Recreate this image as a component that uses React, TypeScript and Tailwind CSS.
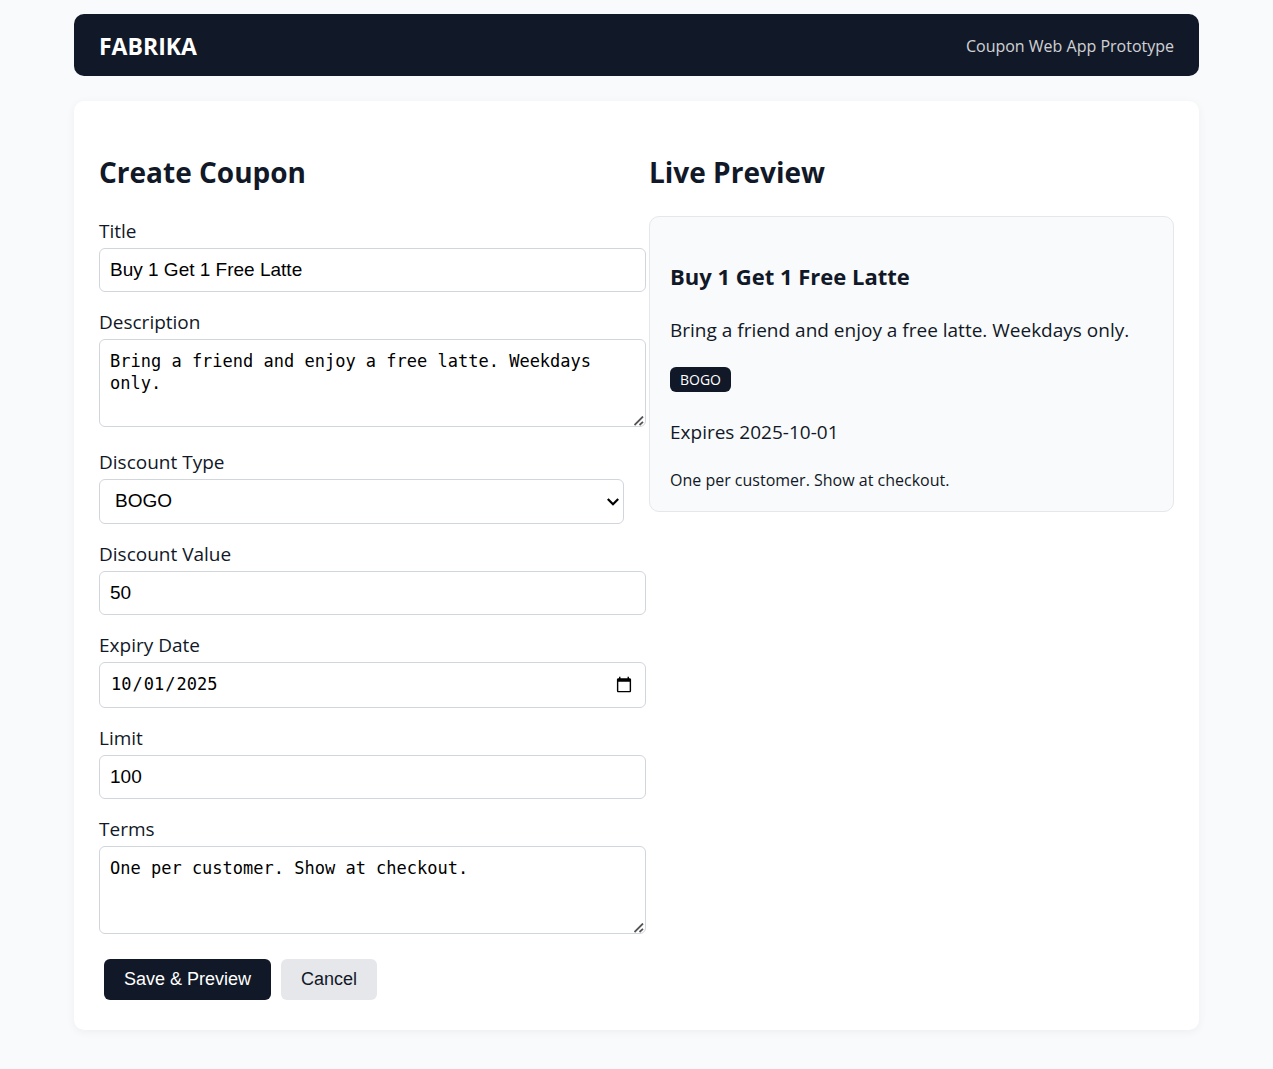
import { useState } from "react";
import type { ReactNode } from "react";

type ChangeHandler = (e: { target: { value: string } }) => void;

const control =
  "block box-content w-full rounded-md border border-gray-300 bg-white px-[10px] text-black";
const sans = "font-['Liberation_Sans',Arial,sans-serif]";
const mono = "font-['DejaVu_Sans_Mono',monospace]";

function Field({ id, label, children }: { id: string; label: string; children: ReactNode }) {
  return (
    <div>
      <label htmlFor={id} className="mb-px block text-[19px] leading-[31px]">
        {label}
      </label>
      {children}
    </div>
  );
}

function TextArea({ id, value, onChange }: { id: string; value: string; onChange: ChangeHandler }) {
  return (
    <div className="relative mb-[5px] box-content w-full pr-[22px]">
      <textarea
        id={id}
        className={`${control} ${mono} h-[66px] resize-none py-[10px] text-[17px] leading-[22px]`}
        value={value}
        onChange={onChange}
      />
      <svg
        className="pointer-events-none absolute right-0.5 bottom-px size-[10px]"
        viewBox="0 0 10 10"
        fill="none"
        stroke="#555"
        strokeWidth="1.8"
        aria-hidden="true"
      >
        <path d="M0.5 9 9 0.5M5.5 9 9 5.8" />
      </svg>
    </div>
  );
}

export default function App() {
  const initial = {
    title: "Buy 1 Get 1 Free Latte",
    description: "Bring a friend and enjoy a free latte. Weekdays only.",
    type: "BOGO",
    value: "50",
    expiry: "2025-10-01",
    limit: "100",
    terms: "One per customer. Show at checkout.",
  };
  const [coupon, setCoupon] = useState(initial);
  const set =
    (key: keyof typeof initial): ChangeHandler =>
    (e) =>
      setCoupon({ ...coupon, [key]: e.target.value });

  return (
    <div className="min-h-screen bg-gray-50 pt-[14px] pb-10 font-['Open_Sans','Noto_Sans',sans-serif] text-[#111827]">
      <div className="mx-auto max-w-[1125px]">
        <header className="flex h-[62px] items-center justify-between rounded-[10px] bg-[#111827] px-[25px] pt-0.5 text-white">
          <div className="text-[23px] font-bold">FABRIKA</div>
          <div className="text-base opacity-80">Coupon Web App Prototype</div>
        </header>

        <main className="mt-[25px] grid grid-cols-2 gap-[25px] rounded-[10px] bg-white p-[25px] shadow-[0_2px_10px_rgba(0,0,0,0.05)]">
          <section>
            <h2 className="mt-[26px] mb-6 text-[28px] leading-10 font-bold">Create Coupon</h2>
            <form className="flex flex-col gap-[15px]" onSubmit={(e) => e.preventDefault()}>
              <Field id="title" label="Title">
                <input id="title" className={`${control} ${sans} h-[42px] text-[19px]`} value={coupon.title} onChange={set("title")} />
              </Field>
              <Field id="description" label="Description">
                <TextArea id="description" value={coupon.description} onChange={set("description")} />
              </Field>
              <Field id="type" label="Discount Type">
                <div className="relative">
                  <select
                    id="type"
                    className={`${sans} block h-[45px] w-full appearance-none rounded-md border border-gray-300 bg-white px-[15px] text-[19px] text-black`}
                    value={coupon.type}
                    onChange={set("type")}
                  >
                    <option>BOGO</option>
                    <option>Percent</option>
                    <option>Fixed</option>
                  </select>
                  <svg
                    className="pointer-events-none absolute top-[19px] right-[5px] h-2 w-3"
                    viewBox="0 0 12 8"
                    fill="none"
                    stroke="black"
                    strokeWidth="2.2"
                    aria-hidden="true"
                  >
                    <path d="M0.8 1 6 6.2 11.2 1" />
                  </svg>
                </div>
              </Field>
              <Field id="value" label="Discount Value">
                <input id="value" type="number" className={`${control} ${sans} h-[42px] text-[19px]`} value={coupon.value} onChange={set("value")} />
              </Field>
              <Field id="expiry" label="Expiry Date">
                <input
                  id="expiry"
                  type="date"
                  className={`${control} ${mono} h-[44px] text-[17px] [&::-webkit-calendar-picker-indicator]:size-[18px]`}
                  value={coupon.expiry}
                  onChange={set("expiry")}
                />
              </Field>
              <Field id="limit" label="Limit">
                <input id="limit" type="number" className={`${control} ${sans} h-[42px] text-[19px]`} value={coupon.limit} onChange={set("limit")} />
              </Field>
              <Field id="terms" label="Terms">
                <TextArea id="terms" value={coupon.terms} onChange={set("terms")} />
              </Field>
              <div className={`${sans} m-[5px] flex gap-[10px] text-lg`}>
                <button type="submit" className="h-[41px] rounded-md bg-[#111827] px-5 pb-0.5 text-white">
                  Save &amp; Preview
                </button>
                <button type="button" className="h-[41px] rounded-md bg-gray-200 px-5 pb-0.5" onClick={() => setCoupon(initial)}>
                  Cancel
                </button>
              </div>
            </form>
          </section>

          <section>
            <h2 className="mt-[26px] mb-6 text-[28px] leading-10 font-bold">Live Preview</h2>
            <article className="rounded-[10px] border border-gray-200 bg-gray-50 px-5 pt-[43px] pb-[17px]">
              <h3 className="text-[22px] leading-8 font-bold">{coupon.title}</h3>
              <p className="mt-6 text-[19px] leading-7">{coupon.description}</p>
              <div className="mt-[23px] flex">
                <span className="rounded-md bg-[#111827] px-[10px] text-sm leading-[25px] text-white">{coupon.type}</span>
              </div>
              <p className="mt-[26px] text-[19px] leading-7">Expires {coupon.expiry}</p>
              <p className="mt-5 text-base leading-7">{coupon.terms}</p>
            </article>
          </section>
        </main>
      </div>
    </div>
  );
}
